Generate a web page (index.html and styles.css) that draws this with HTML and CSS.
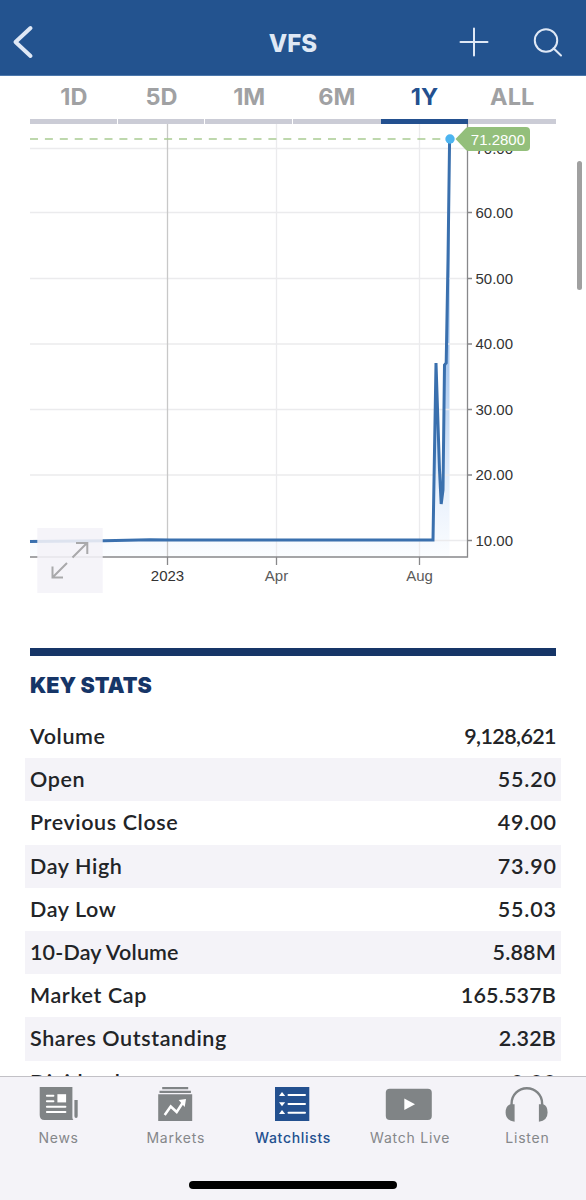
FILE: index.html
```html
<!DOCTYPE html>
<html lang="en">
<head>
    <meta charset="UTF-8">
    <meta name="viewport" content="width=device-width, initial-scale=1">
    <title>VFS</title>
    <link rel="stylesheet" href="styles.css">
</head>
<body>
    <div class="screen">
        <header class="topbar">
            <svg class="back" width="40" height="75" viewBox="0 0 40 75">
                <path d="M30.5 28 L15.5 42 L30.5 56"/>
            </svg>
            <h1>VFS</h1>
            <svg class="actions" width="146" height="75" viewBox="440 0 146 75">
                <path d="M460.500 42H487.500M474 28.500V55.500"/>
                <circle cx="546" cy="40.5" r="11.2"/>
                <path d="M553.5 48.2L561 55.5"/>
            </svg>
        </header>

        <main class="content">
            <nav class="ranges">
                <a class="range">1D</a>
                <a class="range">5D</a>
                <a class="range">1M</a>
                <a class="range">6M</a>
                <a class="range active">1Y</a>
                <a class="range">ALL</a>
            </nav>

            <svg class="chart" width="586" height="524" viewBox="0 124 586 524">
                <defs>
                    <linearGradient id="area" x1="0" y1="139" x2="0" y2="557" gradientUnits="userSpaceOnUse">
                        <stop offset="0" stop-color="#5f9bdf"/>
                        <stop offset="0.5" stop-color="#a5c6ee"/>
                        <stop offset="0.85" stop-color="#e9f1fc"/>
                        <stop offset="1" stop-color="#fbfdff"/>
                    </linearGradient>
                </defs>

                <path class="area" d="M30 541.5L160 540H433L436 363L441 504L445 365H447L449.5 139V557H30Z"/>

                <!-- grid -->
                <path class="grid" d="M30 148.5H467M30 212.5H467M30 278.5H467M30 344H467M30 409.5H467M30 475H467M30 540.5H467"/>
                <path class="grid" d="M276.5 124V557M419.5 124V557"/>
                <path class="grid year" d="M167.5 124V557"/>

                <!-- axes -->
                <path class="axis" d="M30 557H467.5V124"/>
                <path class="axis" d="M467 212.5H472M467 278.5H472M467 344H472M467 409.5H472M467 475H472M467 540.5H472"/>
                <path class="axis" d="M167.5 557V565M276.5 557V565M419.5 557V565"/>

                <path class="last" d="M30 139H447"/>
                <path class="line" d="M30 541.5L104 540.7L150 539.8L170 540H433L436 363L439.5 470L441.2 504L443 490L444.5 365L446.2 363L448 260L449.6 139"/>

                <g class="ylabels">
                    <text x="475.5" y="153.5">70.00</text>
                    <text x="475.5" y="217.8">60.00</text>
                    <text x="475.5" y="283.5">50.00</text>
                    <text x="475.5" y="349">40.00</text>
                    <text x="475.5" y="414.7">30.00</text>
                    <text x="475.5" y="480.3">20.00</text>
                    <text x="475.5" y="545.8">10.00</text>
                </g>
                <g class="xlabels">
                    <text class="strong" x="167.5" y="580.5">2023</text>
                    <text x="276.5" y="580.5">Apr</text>
                    <text x="419.5" y="580.5">Aug</text>
                </g>

                <path class="flag" d="M455.5 139L466 128Q467 127 469 127H526Q530 127 530 131V147Q530 151 526 151H469Q467 151 466 150Z"/>
                <text class="price" x="470.8" y="145.3">71.2800</text>
                <circle cx="450" cy="139" r="4.7" fill="#4cb4f0"/>

                <!-- expand button -->
                <rect class="expand" x="37.3" y="528" width="65.4" height="65"/>
                <path class="arrows" d="M72.5 557.5L87 543M76 543H87.3V554M67 563L52.5 577.5M52.5 566.5V577.5H63"/>
            </svg>

            <section class="stats">
                <h2>KEY STATS</h2>
                <dl>
                    <div class="row"><dt>Volume</dt><dd class="tight">9,128,621</dd></div>
                    <div class="row"><dt>Open</dt><dd>55.20</dd></div>
                    <div class="row"><dt>Previous Close</dt><dd>49.00</dd></div>
                    <div class="row"><dt>Day High</dt><dd>73.90</dd></div>
                    <div class="row"><dt>Day Low</dt><dd>55.03</dd></div>
                    <div class="row"><dt class="mixed">10-Day Volume</dt><dd class="mixed">5.88M</dd></div>
                    <div class="row"><dt>Market Cap</dt><dd class="mixed">165.537B</dd></div>
                    <div class="row"><dt>Shares Outstanding</dt><dd class="mixed">2.32B</dd></div>
                    <div class="row"><dt>Dividend</dt><dd>0.00</dd></div>
                </dl>
            </section>
        </main>

        <div class="scrollbar"></div>

        <footer class="tabbar">
            <nav class="tabs">
                <a class="tab">
                    <svg width="44" height="40" viewBox="36.6 1084 44 40">
                        <path d="M39.3 1087H72V1117.5Q72 1119 73 1120H44Q39.3 1120 39.3 1115Z"/>
                        <path d="M74 1100H77.3V1116Q77.3 1118 75.7 1118Q74 1118 74 1116Z"/>
                        <path class="cut" d="M46.500 1095.8H53M46.500 1101.2H53M46.500 1106.7H65M46.500 1112H65"/>
                        <path class="hole" d="M57 1094.2H65.7V1102.4H57Z"/>
                    </svg>
                    <span>News</span>
                </a>
                <a class="tab">
                    <svg width="44" height="40" viewBox="153.8 1084 44 40">
                        <path d="M162 1087H188V1089.2H162ZM159.3 1090.7H190.7V1093H159.3ZM158 1094.3H192V1121H158Z"/>
                        <path class="cut trend" d="M164.5 1115L170.5 1106.5L176.5 1112L183 1102"/>
                        <path class="hole" d="M178.500 1100L185.8 1099L184.5 1107Z"/>
                    </svg>
                    <span>Markets</span>
                </a>
                <a class="tab active">
                    <svg width="44" height="40" viewBox="271 1084 44 40">
                        <path d="M275 1087H309.3V1121H275Z"/>
                        <path class="cut" d="M288.5 1095H305M288.5 1104H305M288.5 1112.8H305"/>
                        <path class="hole" d="M279 1096L282 1092L285.2 1096ZM279 1102.3L282 1106.3L285.2 1102.3ZM279 1114L282 1110L285.2 1114Z"/>
                    </svg>
                    <span>Watchlists</span>
                </a>
                <a class="tab">
                    <svg width="50" height="40" viewBox="385.2 1084 50 40">
                        <rect x="386" y="1088.7" width="46" height="31.3" rx="4"/>
                        <path class="hole" d="M404.5 1098.5L415.2 1104.3L404.5 1110Z"/>
                    </svg>
                    <span>Watch Live</span>
                </a>
                <a class="tab">
                    <svg width="46" height="40" viewBox="504.4 1084 46 40">
                        <path class="band" d="M512 1105V1103.5A15.2 15.2 0 0 1 542.5 1103.5V1105"/>
                        <path d="M515 1104.2V1121.8Q506 1120.5 506 1112.5Q506 1105.5 511 1104.2ZM539.3 1104.2V1121.8Q548 1120.5 548 1112.5Q548 1105.5 543.5 1104.2Z"/>
                    </svg>
                    <span>Listen</span>
                </a>
            </nav>
            <div class="home"></div>
        </footer>
    </div>
</body>
</html>
```
FILE: styles.css
```css
* {
    box-sizing: border-box;
}

body {
    margin: 0;
    background: #fff;
    color: #222427;
    font-family: Lato, "Open Sans", sans-serif;
}

.screen {
    position: relative;
    display: flex;
    flex-direction: column;
    width: 586px;
    height: 1200px;
    overflow: hidden;
}

.topbar {
    display: grid;
    grid-template-columns: 146px 1fr 146px;
    flex: none;
    height: 76px;
    background: #23538f;
    border-bottom: 1px solid #4c78ac;
}

.topbar h1 {
    margin: 0;
    padding-top: 11px;
    text-align: center;
    font-family: Inter, sans-serif;
    font-size: 24px;
    line-height: 65px;
    font-weight: 800;
    color: #dfe8f5;
}

.topbar svg {
    fill: none;
    stroke: #dfe8f5;
    stroke-linecap: round;
}

.back {
    stroke-width: 4;
    stroke-linejoin: round;
}

.actions {
    stroke-width: 2;
}

.content {
    flex: 1;
    min-height: 0;
    overflow: hidden;
}

.ranges {
    display: grid;
    grid-template-columns: repeat(6, 1fr);
    margin: 0 30px;
    height: 48px;
}

.range {
    border-bottom: 5px solid #cbccd6;
    text-align: center;
    font-family: Inter, sans-serif;
    font-size: 23.5px;
    line-height: 42px;
    font-weight: bold;
    color: #a0a1a3;
}

.range:nth-child(-n+3) {
    border-bottom: 0;
    box-shadow: inset -1px 0 #fff, inset 0 -5px #cbccd6;
}

.range.active {
    color: #23508f;
    border-color: #23508f;
}

.chart {
    display: block;
    font-family: "Liberation Sans", Arial, sans-serif;
    font-size: 15px;
}

.chart path {
    fill: none;
}

.chart .area {
    fill: url(#area);
}

.grid {
    stroke: #ebebed;
    stroke-width: 1.3;
}

.grid.year {
    stroke: #c8c8c8;
}

.axis {
    stroke: #88888a;
    stroke-width: 1.3;
}

.last {
    stroke: #a9cb92;
    stroke-width: 1.5;
    stroke-dasharray: 8 6.9;
}

.line {
    stroke: #3a70ae;
    stroke-width: 3;
}

.ylabels {
    fill: #333;
}

.xlabels {
    fill: #5a5a5a;
    text-anchor: middle;
}

.xlabels .strong {
    fill: #333;
}

.chart .flag {
    fill: #93bf7b;
}

.price {
    fill: #fff;
}

.expand {
    fill: #f4f3f8;
    fill-opacity: 0.88;
}

.arrows {
    stroke: #a9a9ab;
    stroke-width: 2;
}

.stats {
    margin: 0 25px;
}

.stats h2 {
    margin: 0 5px;
    height: 67px;
    padding-top: 10px;
    border-top: 8px solid #163567;
    font-family: Inter, sans-serif;
    font-size: 21.5px;
    line-height: 38px;
    font-weight: 900;
    color: #163567;
}

.stats dl {
    margin: 0;
}

.row {
    display: flex;
    justify-content: space-between;
    height: 43.2px;
    padding: 0 5px;
    font-size: 21.5px;
    line-height: 43px;
    font-weight: 600;
}

.row:nth-child(even) {
    background: #f4f3f8;
}

.row dt {
    letter-spacing: 0.6px;
}

.row dd {
    margin: 0 -0.8px 0 0;
    letter-spacing: 0.8px;
}

.row .mixed {
    margin: 0;
    letter-spacing: 0.15px;
}

.row .tight {
    margin: 0;
    letter-spacing: -0.6px;
}

.scrollbar {
    position: absolute;
    top: 161px;
    right: 4px;
    width: 5px;
    height: 129px;
    border-radius: 3px;
    background: #a0a0a0;
}

.tabbar {
    flex: none;
    height: 124px;
    border-top: 1px solid #c2c1c6;
    background: #f4f3f8;
}

.tabs {
    display: grid;
    grid-template-columns: repeat(5, 1fr);
    height: 104px;
    padding-top: 7px;
}

.tab {
    display: flex;
    flex-direction: column;
    align-items: center;
    font-family: Inter, sans-serif;
    font-size: 14px;
    line-height: 28px;
    letter-spacing: 0.75px;
    color: #85878a;
    fill: #808486;
}

.tab.active {
    font-weight: 500;
    letter-spacing: 0.7px;
    color: #23508f;
    fill: #23508f;
}

.cut {
    fill: none;
    stroke: #fff;
    stroke-width: 2;
    stroke-linecap: round;
}

.trend {
    stroke-width: 2.5;
    stroke-linecap: butt;
}

.hole {
    fill: #fff;
}

.band {
    fill: none;
    stroke: #808486;
    stroke-width: 2.4;
}

.home {
    width: 208px;
    height: 8px;
    margin: 0 auto;
    border-radius: 4px;
    background: #000;
}
```
